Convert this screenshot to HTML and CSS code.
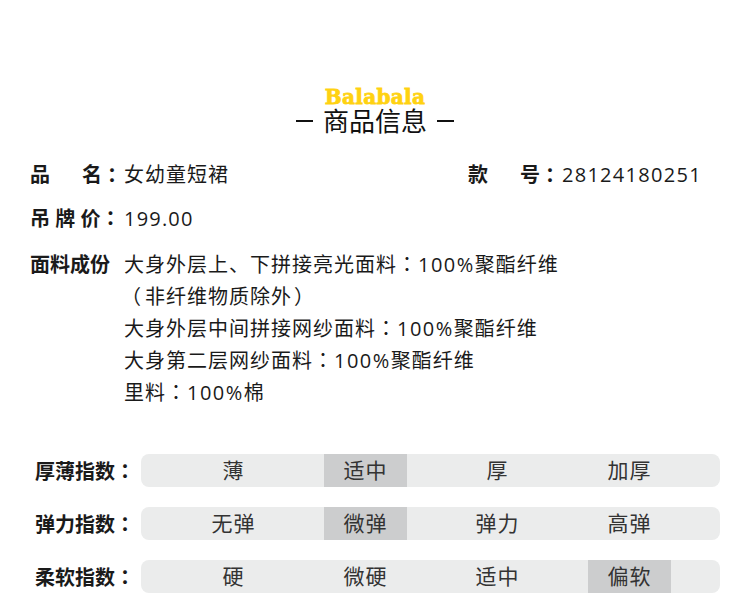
FILE: index.html
```html
<!DOCTYPE html>
<html lang="zh-CN">
<head>
<meta charset="utf-8">
<title>商品信息</title>
<link rel="stylesheet" href="styles.css">
</head>
<body>
<main class="page">
  <header class="head">
    <div class="logo">Balabala</div>
    <h1 class="title"><span class="dash"></span>商品信息<span class="dash"></span></h1>
  </header>
  <section class="info">
    <div class="row row-split">
      <div class="pair"><span class="key key-name">品<i class="gap"></i>名<span class="tc">：</span></span><span class="val">女幼童短裙</span></div>
      <div class="pair"><span class="key key-name">款<i class="gap"></i>号<span class="tc">：</span></span><span class="val sku">28124180251</span></div>
    </div>
    <div class="row row-price">
      <div class="pair"><span class="key key-price">吊 牌 价<span class="tc">：</span></span><span class="val num">199.00</span></div>
    </div>
    <div class="row">
      <span class="key key-fabric">面料成份</span>
      <div class="val lines">
        <div class="line">大身外层上、下拼接亮光面料<span class="tc">：</span><span class="pct">100%</span>聚酯纤维</div>
        <div class="line"><span class="tc open">（</span>非纤维物质除外<span class="tc close">）</span></div>
        <div class="line">大身外层中间拼接网纱面料<span class="tc">：</span><span class="pct">100%</span>聚酯纤维</div>
        <div class="line">大身第二层网纱面料<span class="tc">：</span><span class="pct">100%</span>聚酯纤维</div>
        <div class="line">里料<span class="tc">：</span><span class="pct">100%</span>棉</div>
      </div>
    </div>
  </section>
  <section class="indexes">
    <div class="index">
      <span class="index-name">厚薄指数<span class="tc">：</span></span>
      <div class="bar"><span class="cell">薄</span><span class="cell on">适中</span><span class="cell">厚</span><span class="cell">加厚</span></div>
    </div>
    <div class="index">
      <span class="index-name">弹力指数<span class="tc">：</span></span>
      <div class="bar"><span class="cell">无弹</span><span class="cell on">微弹</span><span class="cell">弹力</span><span class="cell">高弹</span></div>
    </div>
    <div class="index">
      <span class="index-name">柔软指数<span class="tc">：</span></span>
      <div class="bar"><span class="cell">硬</span><span class="cell">微硬</span><span class="cell">适中</span><span class="cell on">偏软</span></div>
    </div>
  </section>
</main>
</body>
</html>
```
FILE: styles.css
```css
* { box-sizing: border-box; }
html, body { margin: 0; padding: 0; background: #fff; }
body {
  width: 750px;
  height: 593px;
  overflow: hidden;
  font-family: "Open Sans", "Noto Sans CJK SC", sans-serif;
  color: #1a1a1a;
}
.page { padding-top: 89px; }
.head { display: flex; flex-direction: column; align-items: center; }
.logo {
  height: 17px;
  font-family: "DejaVu Serif", serif;
  font-weight: 900;
  font-size: 20px;
  line-height: 17px;
  letter-spacing: 0.35px;
  color: #ffd211;
  -webkit-text-stroke: 0.8px #ffd211;
}
.title {
  display: flex;
  align-items: center;
  gap: 10px;
  margin: 0;
  height: 30px;
  font-size: 26px;
  line-height: 30px;
  font-weight: 400;
  color: #111;
}
.dash { width: 17px; height: 2px; background: #111; }
.tc {
  display: inline-block;
  line-height: 1;
  font-family: "Noto Sans CJK TC", sans-serif;
}
.open { margin-left: -3px; margin-right: 3px; }
.close { margin-left: 2px; }
.info { padding: 0 30px; margin-top: 23px; }
.row { display: flex; font-size: 20px; line-height: 32px; margin-bottom: 13px; }
.row-split { justify-content: space-between; padding-right: 18px; margin-bottom: 12px; }
.row-price { margin-bottom: 14px; }
.pair { display: flex; }
.key { font-weight: 700; white-space: nowrap; }
.key-name { width: 94px; display: flex; align-items: center; }
.gap { width: 32px; }
.key-price { width: 94px; }
.key-fabric { width: 94px; }
.val { letter-spacing: 1px; }
.num { letter-spacing: 1.2px; }
.sku { letter-spacing: 1.3px; }
.pct { letter-spacing: 1.5px; }
.line { height: 32px; }
.indexes { margin-top: 45px; padding-left: 35px; }
.index { display: flex; align-items: center; height: 33px; margin-bottom: 20px; }
.index-name { width: 106px; font-size: 20px; font-weight: 700; white-space: nowrap; }
.bar {
  display: flex;
  gap: 49px;
  width: 579px;
  height: 33px;
  padding-left: 51px;
  background: #ebecec;
  border-radius: 8px;
  overflow: hidden;
}
.cell {
  width: 83px;
  text-align: center;
  font-size: 21px;
  line-height: 33px;
  letter-spacing: 1px;
  color: #333;
}
.on { background: #cccdce; }
```
